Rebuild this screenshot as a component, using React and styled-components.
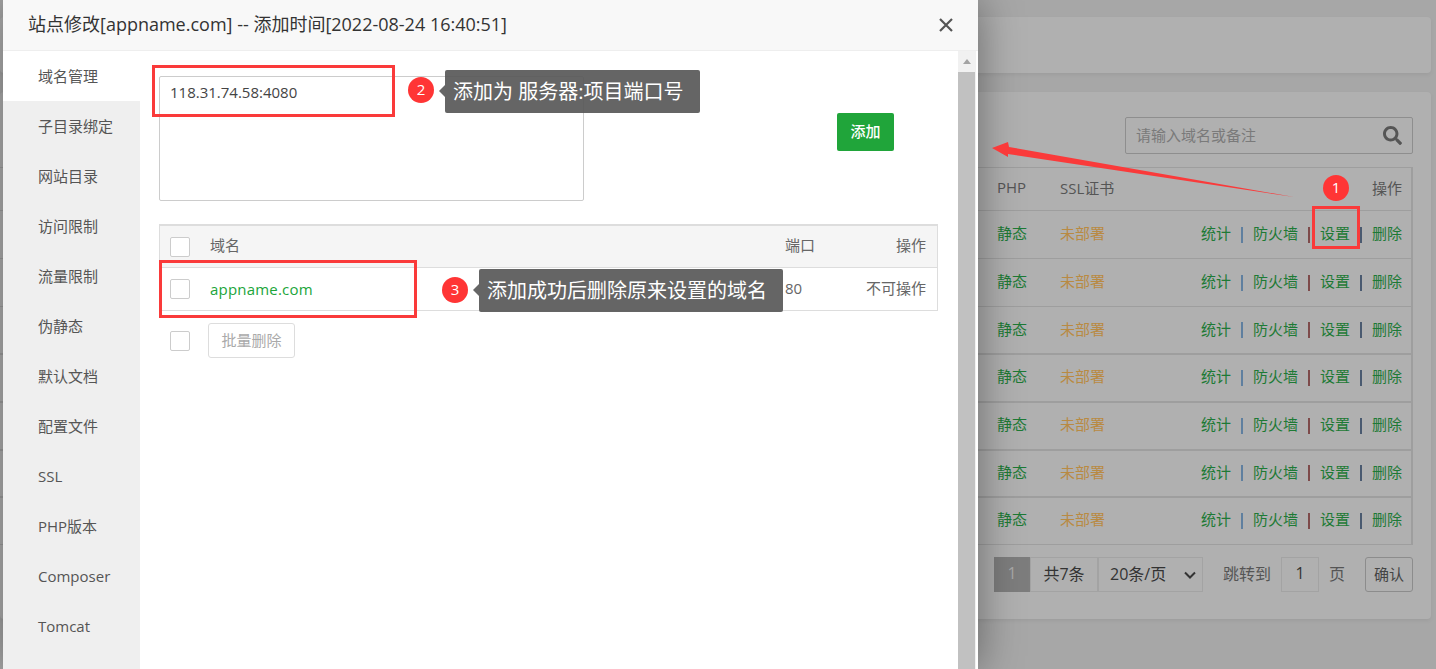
import React from "react";
import styled, { createGlobalStyle } from "styled-components";
import { FaSearch } from "react-icons/fa";

const FONT = `"Open Sans", "Noto Sans CJK SC", sans-serif`;

const Global = createGlobalStyle`
  html, body { margin: 0; padding: 0; height: 669px; overflow: hidden; background: #a6a6a6; }
  * { box-sizing: border-box; }
  body { font-family: ${FONT}; font-size: 15px; }
`;

const Page = styled.div`
  position: relative;
  width: 1436px;
  height: 669px;
  overflow: hidden;
  background: #a7a7a7;
  padding: 17px 5px 0 0;
`;

/* ---------- dimmed page behind the dialog ---------- */
const Card = styled.div`
  background: #b0b0b0;
  border-radius: 4px;
  box-shadow: 0 2px 4px rgba(0,0,0,.06);
`;
const TopCard = styled(Card)`height: 56px; margin-bottom: 19px;`;
const MainCard = styled(Card)`
  height: 527px;
  padding: 25px 18px 0 0;
  display: flex;
  flex-direction: column;
  align-items: flex-end;
`;
const Search = styled.div`
  width: 288px;
  height: 37px;
  border: 1px solid #8e8e8e;
  border-radius: 2px;
  display: flex;
  align-items: center;
  justify-content: space-between;
  padding: 0 10px;
  color: #7a7a7a;
  margin-bottom: 13px;
  span { margin-bottom: 3px; }
  svg { color: #555; width: 19px; height: 19px; }
`;
const BgTable = styled.div`
  width: 100%;
  border-top: 1px solid #9e9e9e;
  border-right: 2px solid #9e9e9e;
  color: #555;
`;
const BgRow = styled.div`
  display: flex;
  align-items: center;
  height: ${p => p.$h}px;
  border-bottom: 1px solid #9e9e9e;
  box-shadow: ${p => p.$thick ? "0 1px 0 #9e9e9e" : "none"};
  padding-right: 9px;
`;
const Col = styled.span`
  color: ${p => p.$c || "#555"};
  white-space: nowrap;
  margin-bottom: 4px;
`;
const PhpCol = styled(Col)`margin-left: 997px; width: 63px;`;
const SslCol = styled(Col)`flex: 1;`;
const LinkGroup = styled.div`display: flex; align-items: center;`;
const TLink = styled.span`color: #1d7a35; white-space: nowrap; margin-bottom: 4px;`;
const Pipe = styled.span`
  width: 2px;
  height: 16px;
  margin: 0 10px;
  background: ${p => p.$c};
`;
const Pager = styled.div`
  display: flex;
  align-items: center;
  align-self: stretch;
  margin-top: 12px;
  padding-left: 994px;
  color: #333;
  font-size: 16px;
`;
const PageBox = styled.div`
  height: 35px;
  width: ${p => p.$w}px;
  display: flex;
  align-items: center;
  justify-content: ${p => p.$between ? "space-between" : "center"};
  padding: ${p => p.$between ? "0 6px 3px 11px" : "0 0 3px"};
  border: 1px solid #a3a3a3;
  margin-left: ${p => p.$ml || 0}px;
  background: ${p => p.$active ? "#7d7d7d" : "transparent"};
  color: ${p => p.$active ? "#a8a8a8" : "#333"};
  border-color: ${p => p.$active ? "#7d7d7d" : "#a3a3a3"};
  & + & { border-left: ${p => p.$ml ? "1px" : "0"} solid #a3a3a3; }
  svg { margin-top: 3px; }
`;
const PagerText = styled.span`
  color: #555;
  margin-left: ${p => p.$ml}px;
  margin-bottom: 3px;
  white-space: nowrap;
`;
const ConfirmBtn = styled.div`
  width: 48px;
  height: 35px;
  margin-left: 20px;
  padding-bottom: 3px;
  font-size: 15px;
  border: 1px solid #8c8c8c;
  border-radius: 3px;
  display: flex;
  align-items: center;
  justify-content: center;
  color: #444;
`;

/* ---------- dialog ---------- */
const Dialog = styled.div`
  position: absolute;
  left: 3px;
  top: 0;
  width: 975px;
  height: 669px;
  background: #fff;
  box-shadow: 1px 1px 40px rgba(0,0,0,.4);
  display: flex;
  flex-direction: column;
  overflow: hidden;
`;
const TitleBar = styled.div`
  flex: 0 0 51px;
  background: #f8f8f8;
  border-bottom: 1px solid #eee;
  display: flex;
  align-items: center;
  justify-content: space-between;
  padding: 0 24px 1px 25px;
  color: #333;
  font-size: 18px;
  span { margin-bottom: 3px; }
`;
const DialogBody = styled.div`
  flex: 1;
  display: flex;
  min-height: 0;
`;
const Side = styled.div`
  width: 137px;
  background: #efefef;
`;
const SideItem = styled.div`
  height: 50px;
  line-height: 50px;
  padding-left: 35px;
  color: #555;
  background: ${p => p.$active ? "#fff" : "transparent"};
`;
const Content = styled.div`
  flex: 1;
  padding: 25px 20px 0 19px;
`;
const AddRow = styled.div`
  display: flex;
  align-items: flex-start;
`;
const DomainInput = styled.div`
  width: 425px;
  height: 125px;
  border: 1px solid #ccc;
  border-radius: 2px;
  padding: 5px 10px;
  line-height: 20px;
  color: #444;
`;
const AddBtn = styled.div`
  width: 57px;
  height: 38px;
  margin: 37px 0 0 253px;
  padding-bottom: 3px;
  border-radius: 2px;
  background: #20a53a;
  color: #fff;
  font-size: 15px;
  font-weight: 500;
  display: flex;
  align-items: center;
  justify-content: center;
`;
const DomainTable = styled.div`
  margin-top: 23px;
  border: 1px solid #ddd;
  border-top-width: 2px;
  color: #666;
`;
const DRow = styled.div`
  display: flex;
  align-items: center;
  height: ${p => p.$h}px;
  padding: 0 11px 0 10px;
  background: ${p => p.$head ? "#f5f5f5" : "#fff"};
  border-bottom: ${p => p.$head ? "1px solid #ddd" : "0"};
`;
const Check = styled.span`
  display: block;
  flex: none;
  width: 20px;
  height: 20px;
  border: 1px solid #ccc;
  border-radius: 2px;
  background: #fff;
`;
const NameCell = styled.span`
  flex: 1;
  margin-left: 20px;
  margin-bottom: ${p => p.$green ? 1 : 4}px;
  letter-spacing: ${p => p.$green ? ".2px" : "0"};
  color: ${p => p.$green ? "#20a53a" : "#666"};
`;
const PortCell = styled.span`width: 60px; margin-bottom: ${p => p.$low ? 2 : 4}px;`;
const OpCell = styled.span`width: 81px; text-align: right; margin-bottom: 4px;`;
const BulkRow = styled.div`
  display: flex;
  align-items: center;
  margin: 12px 0 0 11px;
`;
const BulkBtn = styled.div`
  width: 87px;
  height: 35px;
  margin-left: 18px;
  padding-bottom: 3px;
  border: 1px solid #ddd;
  border-radius: 3px;
  color: #aaa;
  display: flex;
  align-items: center;
  justify-content: center;
`;
const ScrollTrack = styled.div`
  width: 20px;
  background: #f1f1f1;
  border-right: 2px solid #fff;
  display: flex;
  flex-direction: column;
  align-items: center;
  padding-top: 8px;
  padding-right: 1px;
`;
const ScrollUp = styled.span`
  width: 0;
  height: 0;
  border-left: 4px solid transparent;
  border-right: 4px solid transparent;
  border-bottom: 5px solid #a3a3a3;
  margin-bottom: 8px;
`;
const ScrollThumb = styled.div`
  width: 17px;
  flex: 1;
  background: #c1c1c1;
`;

/* ---------- annotations over the screenshot ---------- */
const RedBox = styled.div`
  position: absolute;
  left: ${p => p.$x}px;
  top: ${p => p.$y}px;
  width: ${p => p.$w}px;
  height: ${p => p.$h}px;
  border: 3px solid #fa3a3a;
  pointer-events: none;
`;
const Badge = styled.div`
  position: absolute;
  left: ${p => p.$x - 13}px;
  top: ${p => p.$y - 13}px;
  width: 26px;
  height: 26px;
  padding-bottom: 2px;
  border-radius: 50%;
  background: #ff3535;
  color: #fff;
  font-size: 15px;
  display: flex;
  align-items: center;
  justify-content: center;
`;
const Tip = styled.div`
  position: absolute;
  left: ${p => p.$x}px;
  top: ${p => p.$y}px;
  width: ${p => p.$w}px;
  height: 43px;
  padding-left: 8px;
  border-radius: 2px;
  background: rgba(88,88,88,.92);
  color: #fff;
  font-size: 20px;
  line-height: 43px;
  white-space: nowrap;
  &::before {
    content: "";
    position: absolute;
    left: -6px;
    top: 15px;
    border-top: 6px solid transparent;
    border-bottom: 6px solid transparent;
    border-right: 6px solid #666;
  }
`;
const Arrow = styled.svg`
  position: absolute;
  left: 985px;
  top: 135px;
`;

const SIDE = ["域名管理","子目录绑定","网站目录","访问限制","流量限制","伪静态","默认文档","配置文件","SSL","PHP版本","Composer","Tomcat"];
const ROWS = [48, 48, 47, 48, 48, 47, 48];

export default function App() {
  return (
    <Page>
      <Global />
      <TopCard />
      <MainCard>
        <Search>
          <span>请输入域名或备注</span>
          <FaSearch />
        </Search>
        <BgTable>
          <BgRow $h={43}>
            <PhpCol>PHP</PhpCol>
            <SslCol>SSL证书</SslCol>
            <Col>操作</Col>
          </BgRow>
          {ROWS.map((h, i) => (
            <BgRow key={i} $h={h} $thick={i >= 2 && i < 6}>
              <PhpCol $c="#1d7a35">静态</PhpCol>
              <SslCol $c="#b98a42">未部署</SslCol>
              <LinkGroup>
                <TLink>统计</TLink>
                <Pipe $c="#5f7f9f" />
                <TLink>防火墙</TLink>
                <Pipe $c="#7d4a4a" />
                <TLink>设置</TLink>
                <Pipe $c="#4a5a70" />
                <TLink>删除</TLink>
              </LinkGroup>
            </BgRow>
          ))}
        </BgTable>
        <Pager>
          <PageBox $w={36} $active>1</PageBox>
          <PageBox $w={68}>共7条</PageBox>
          <PageBox $w={105} $between>
            <span>20条/页</span>
            <svg width="12" height="8" viewBox="0 0 12 8"><path d="M1 1.5l5 5 5-5" fill="none" stroke="#333" strokeWidth="2"/></svg>
          </PageBox>
          <PagerText $ml={20}>跳转到</PagerText>
          <PageBox $w={38} $ml={10}>1</PageBox>
          <PagerText $ml={10}>页</PagerText>
          <ConfirmBtn>确认</ConfirmBtn>
        </Pager>
      </MainCard>

      <Dialog>
        <TitleBar>
          <span>站点修改[appname.com] -- 添加时间[2022-08-24 16:40:51]</span>
          <svg width="16" height="16" viewBox="0 0 16 16"><path d="M2 2l12 12M14 2L2 14" stroke="#555" strokeWidth="2.2" fill="none"/></svg>
        </TitleBar>
        <DialogBody>
          <Side>
            {SIDE.map((s, i) => <SideItem key={s} $active={i === 0}>{s}</SideItem>)}
          </Side>
          <Content>
            <AddRow>
              <DomainInput>118.31.74.58:4080</DomainInput>
              <AddBtn>添加</AddBtn>
            </AddRow>
            <DomainTable>
              <DRow $head $h={42}>
                <Check />
                <NameCell>域名</NameCell>
                <PortCell>端口</PortCell>
                <OpCell>操作</OpCell>
              </DRow>
              <DRow $h={42}>
                <Check />
                <NameCell $green>appname.com</NameCell>
                <PortCell $low>80</PortCell>
                <OpCell>不可操作</OpCell>
              </DRow>
            </DomainTable>
            <BulkRow>
              <Check />
              <BulkBtn>批量删除</BulkBtn>
            </BulkRow>
          </Content>
          <ScrollTrack>
            <ScrollUp />
            <ScrollThumb />
          </ScrollTrack>
        </DialogBody>
      </Dialog>

      <RedBox $x={152} $y={65} $w={243} $h={52} />
      <RedBox $x={159} $y={260} $w={258} $h={58} />
      <RedBox $x={1312} $y={206} $w={48} $h={43} />
      <Badge $x={421} $y={90}>2</Badge>
      <Badge $x={455} $y={290}>3</Badge>
      <Badge $x={1336} $y={188}>1</Badge>
      <Tip $x={445} $y={70} $w={255}>添加为 服务器:项目端口号</Tip>
      <Tip $x={479} $y={269} $w={304}>添加成功后删除原来设置的域名</Tip>
      <Arrow width="312" height="66" viewBox="985 135 312 66">
        <polygon fill="#fa3a3a" points="992,148 1008,142 1009,147 1294,197 1008,154 1008,157" />
      </Arrow>
    </Page>
  );
}
